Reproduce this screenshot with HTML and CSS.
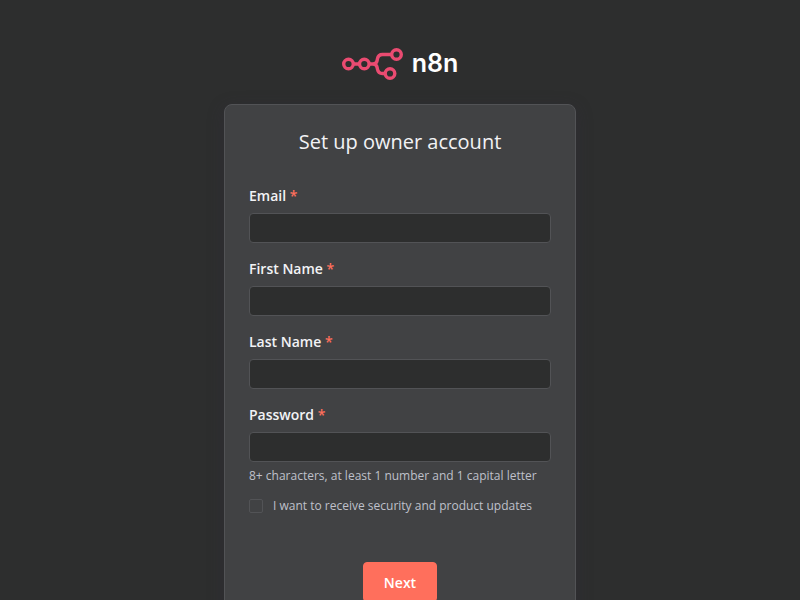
FILE: index.html
```html
<!DOCTYPE html>
<html lang="en">
<head>
<meta charset="utf-8">
<meta name="viewport" content="width=device-width, initial-scale=1">
<title>n8n</title>
<link rel="stylesheet" href="styles.css">
</head>
<body>
<main class="auth">
  <div class="logo">
    <svg class="logo-mark" viewBox="0 0 62 32" width="62" height="32" fill="none" stroke="#ea4b71" stroke-width="3.4" aria-hidden="true">
      <circle cx="6.5" cy="16" r="4.8"/>
      <circle cx="22.3" cy="16" r="4.8"/>
      <circle cx="54.5" cy="6.5" r="4.8"/>
      <circle cx="48" cy="25.5" r="4.8"/>
      <path d="M11 16h7M27 16h4c2.200 0 3.700-1.300 4.100-3.400l.3-1.600c.5-2.700 2.300-4.500 5.100-4.500h9.500M31 16c2.200 0 3.700 1.300 4.100 3.400l.3 1.600c.5 2.700 2.300 4.500 5.100 4.500h3"/>
    </svg>
    <span class="logo-text">n8n</span>
  </div>
  <form class="card">
    <h1 class="title">Set up owner account</h1>
    <div class="field">
      <label class="label" for="email">Email <span class="required">*</span></label>
      <input class="input" id="email" type="email">
    </div>
    <div class="field">
      <label class="label" for="first">First Name <span class="required">*</span></label>
      <input class="input" id="first" type="text">
    </div>
    <div class="field">
      <label class="label" for="last">Last Name <span class="required">*</span></label>
      <input class="input" id="last" type="text">
    </div>
    <div class="field">
      <label class="label" for="password">Password <span class="required">*</span></label>
      <input class="input" id="password" type="password">
      <p class="hint">8+ characters, at least 1 number and 1 capital letter</p>
    </div>
    <div class="agree">
      <input class="checkbox" id="updates" type="checkbox">
      <label for="updates">I want to receive security and product updates</label>
    </div>
    <button class="submit" type="button">Next</button>
  </form>
</main>
</body>
</html>
```

FILE: styles.css
```css
* { box-sizing: border-box; }
html { background: #2d2e2e; }
body {
  margin: 0;
  font-family: "Open Sans", sans-serif;
  color: #f2f2f5;
  overflow-x: hidden;
  scrollbar-width: none;
}
.auth {
  display: flex;
  flex-direction: column;
  align-items: center;
  gap: 24px;
  padding: 48px 16px;
}
.logo { display: flex; align-items: center; gap: 8px; height: 32px; }
.logo-text {
  padding-bottom: 2px;
  font-family: Inter, sans-serif;
  font-size: 25px;
  font-weight: 600;
  line-height: 28px;
  color: #fff;
}
.card {
  width: 100%;
  max-width: 352px;
  padding: 24px;
  display: flex;
  flex-direction: column;
  background: #414244;
  border: 1px solid #525356;
  border-radius: 8px;
  box-shadow: 0 4px 16px rgba(50, 46, 62, 0.4);
}
.title {
  margin: 0 0 32px;
  font-size: 20px;
  font-weight: 400;
  line-height: 25px;
  text-align: center;
}
.field { margin-bottom: 16px; }
.label {
  display: block;
  margin-bottom: 8px;
  font-size: 14px;
  font-weight: 600;
  line-height: 19px;
}
.required { color: #ff6f5c; }
.input {
  display: block;
  width: 100%;
  height: 30px;
  padding: 0 8px;
  color: #fff;
  font: inherit;
  font-size: 14px;
  background: #2d2e2e;
  border: 1px solid #525356;
  border-radius: 4px;
}
.hint { margin: 6px 0 0; font-size: 12px; line-height: 16px; color: #bfc0ca; }
.agree {
  display: flex;
  align-items: center;
  gap: 10px;
  margin-top: -2px;
  font-size: 12px;
  line-height: 16px;
  color: #bfc0ca;
}
.checkbox {
  appearance: none;
  width: 14px;
  height: 14px;
  margin: 0;
  border: 1px solid #525356;
  border-radius: 2px;
}
.submit {
  align-self: center;
  margin-top: 48px;
  padding: 0 20px;
  height: 40px;
  font: inherit;
  font-size: 14px;
  font-weight: 600;
  color: #fff;
  background: #ff6f5c;
  border: 1px solid #ff6f5c;
  border-radius: 4px;
}
```
